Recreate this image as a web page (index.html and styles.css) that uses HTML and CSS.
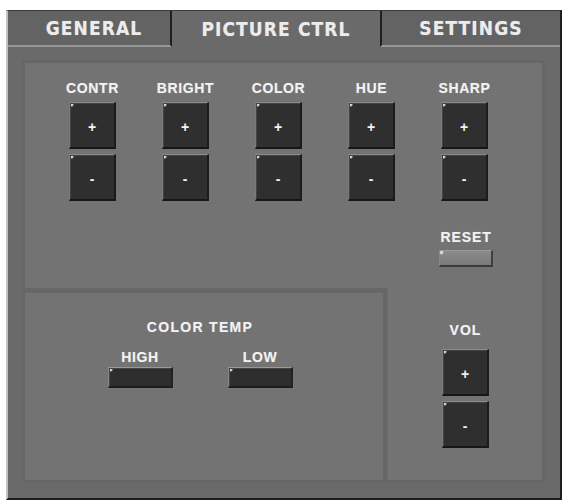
FILE: index.html
```html
<!DOCTYPE html>
<html lang="en">
<head>
<meta charset="utf-8">
<title>Picture Control</title>
<link rel="stylesheet" href="styles.css">
</head>
<body>
<div class="frame">
  <div class="tabs">
    <div class="tab tab-general">GENERAL</div>
    <div class="tab tab-active">PICTURE CTRL</div>
    <div class="tab tab-settings">SETTINGS</div>
  </div>
  <div class="body">
    <div class="panel">
      <div class="top">
        <div class="controls">
          <div class="ctl">
            <div class="label">CONTR</div>
            <div class="key"><span>+</span></div>
            <div class="key"><span>-</span></div>
          </div>
          <div class="ctl">
            <div class="label">BRIGHT</div>
            <div class="key"><span>+</span></div>
            <div class="key"><span>-</span></div>
          </div>
          <div class="ctl">
            <div class="label">COLOR</div>
            <div class="key"><span>+</span></div>
            <div class="key"><span>-</span></div>
          </div>
          <div class="ctl">
            <div class="label">HUE</div>
            <div class="key"><span>+</span></div>
            <div class="key"><span>-</span></div>
          </div>
          <div class="ctl">
            <div class="label">SHARP</div>
            <div class="key"><span>+</span></div>
            <div class="key"><span>-</span></div>
          </div>
          <div class="ctl reset">
            <div class="label">RESET</div>
            <div class="bar bar-light"></div>
          </div>
        </div>
      </div>
      <div class="bottom">
        <div class="temp">
          <div class="label temp-title">COLOR TEMP</div>
          <div class="temp-row">
            <div class="temp-item">
              <div class="label">HIGH</div>
              <div class="bar bar-dark"></div>
            </div>
            <div class="temp-item">
              <div class="label">LOW</div>
              <div class="bar bar-dark"></div>
            </div>
          </div>
        </div>
        <div class="vol">
          <div class="label">VOL</div>
          <div class="key"><span>+</span></div>
          <div class="key"><span>-</span></div>
        </div>
      </div>
    </div>
  </div>
</div>
</body>
</html>
```
FILE: styles.css
```css
* { box-sizing: border-box; }

body {
  margin: 0;
  background: #ffffff;
  font-family: "Liberation Sans", Arial, sans-serif;
}

/* outer window frame */
.frame {
  margin: 10px 0 0 6px;
  width: 556px;
  height: 490px;
  border-left: 2px solid #c2c2c2;
  border-top: 1px solid #3a3a3a;
  border-right: 2px solid #1e1e1e;
  border-bottom: 2px solid #1e1e1e;
  background: #6a6a6a;
  display: flex;
  flex-direction: column;
}

/* tab strip */
.tabs {
  display: flex;
  height: 36px;
}

.tab {
  display: flex;
  align-items: center;
  justify-content: center;
  color: #ececec;
  font-family: "DejaVu Sans Condensed", "DejaVu Sans", sans-serif;
  font-stretch: condensed;
  font-weight: bold;
  font-size: 19px;
  letter-spacing: 1.1px;
  background: #636363;
  border-bottom: 2px solid #979797;
  text-shadow: 0 0 1px rgba(255, 255, 255, 0.35);
}

.tab-general {
  width: 164px;
  padding-left: 10px;
  border-right: 2px solid #1f1f1f;
}

.tab-active {
  width: 208px;
  background: #6a6a6a;
  border-bottom: none;
}

.tab-settings {
  flex: 1;
  border-left: 2px solid #1f1f1f;
}

/* page body under the tabs */
.body {
  flex: 1;
  padding: 13px 15px 15px 14px;
}

.panel {
  height: 100%;
  border: 3px solid #666666;
  background: #737373;
  display: flex;
  flex-direction: column;
}

/* labels */
.label {
  color: #f2f2f2;
  font-weight: bold;
  font-size: 14px;
  line-height: 16px;
  height: 16px;
  letter-spacing: 0.6px;
  white-space: nowrap;
  text-align: center;
  text-shadow: 0 0 1px rgba(255, 255, 255, 0.35);
}

/* picture adjustment keys */
.top {
  height: 225px;
  padding: 17px 0 0 21px;
}

.controls {
  display: grid;
  grid-template-columns: repeat(5, 93px);
  row-gap: 28px;
}

.ctl {
  display: flex;
  flex-direction: column;
  align-items: center;
}

.ctl .label {
  margin-bottom: 6px;
}

.ctl .key + .key,
.vol .key + .key {
  margin-top: 5px;
}

.reset {
  grid-column: 5;
}

.reset .label {
  margin-bottom: 5px;
  margin-left: 3px;
  letter-spacing: 0.9px;
}

.key {
  width: 47px;
  height: 47px;
  display: flex;
  align-items: center;
  justify-content: center;
  background:
    radial-gradient(circle at 1.5px 1.5px, #d8d8d8 0, #d8d8d8 1.2px, rgba(216, 216, 216, 0) 2.6px),
    #2f2f2f;
  border-top: 1px solid #8a8a8a;
  border-left: 1px solid #7a7a7a;
  border-right: 2px solid #1b1b1b;
  border-bottom: 2px solid #161616;
  box-shadow: inset 1px 1px 0 #444444;
  color: #f4f4f4;
  font-weight: bold;
  font-size: 14px;
  line-height: 1;
}

.key span {
  margin-top: 3px;
}

/* flat bar buttons */
.bar {
  border-top: 1px solid #9a9a9a;
  border-left: 1px solid #868686;
  border-right: 2px solid #222222;
  border-bottom: 2px solid #1c1c1c;
}

.bar-light {
  width: 54px;
  height: 17px;
  margin-left: 3px;
  background:
    radial-gradient(circle at 1.5px 1.5px, #dcdcdc 0, #dcdcdc 1px, rgba(220, 220, 220, 0) 2.4px),
    linear-gradient(#8a8a8a, #7a7a7a);
  border-bottom-color: #3a3a3a;
  border-right-color: #3e3e3e;
}

.bar-dark {
  width: 65px;
  height: 21px;
  background:
    radial-gradient(circle at 1.5px 1.5px, #d8d8d8 0, #d8d8d8 1.2px, rgba(216, 216, 216, 0) 2.6px),
    #2e2e2e;
  box-shadow: inset 1px 1px 0 #444444;
}

/* lower section: colour temperature and volume */
.bottom {
  flex: 1;
  display: flex;
}

.temp {
  width: 363px;
  border-top: 5px solid #676767;
  border-right: 5px solid #676767;
  padding: 26px 8px 0 0;
  display: flex;
  flex-direction: column;
  align-items: center;
}

.temp-title {
  letter-spacing: 1.3px;
}

.temp-row {
  display: flex;
  gap: 55px;
  margin-top: 14px;
}

.temp-item {
  width: 65px;
  display: flex;
  flex-direction: column;
  align-items: center;
}

.temp-item .label {
  margin-bottom: 2px;
}

.vol {
  flex: 1;
  padding-top: 34px;
  border-left: 1px solid #767676;
  display: flex;
  flex-direction: column;
  align-items: center;
}

.vol .label {
  margin-bottom: 11px;
  letter-spacing: 1px;
}
```
